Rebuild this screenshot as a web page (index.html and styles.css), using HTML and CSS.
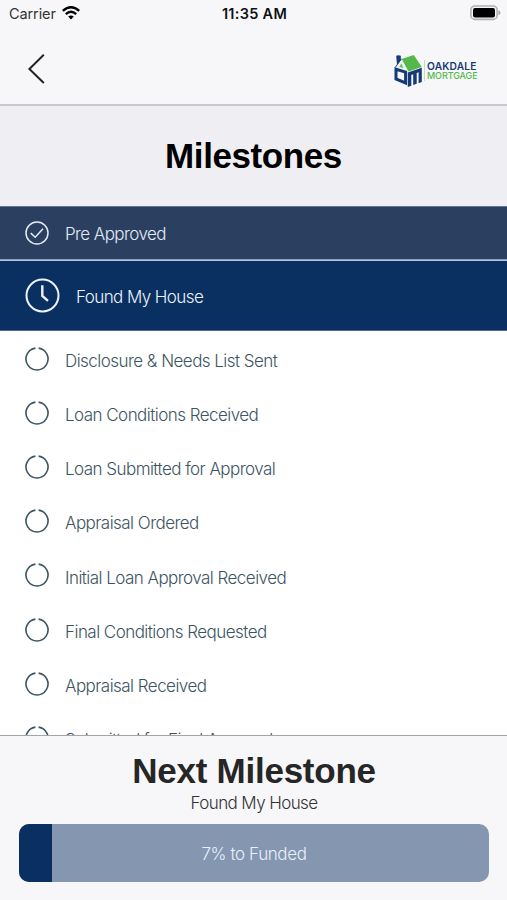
FILE: index.html
```html
<!DOCTYPE html>
<html lang="en">
<head>
<meta charset="utf-8">
<title>Milestones</title>
<link rel="stylesheet" href="styles.css">
</head>
<body>
<svg class="defs" width="0" height="0" aria-hidden="true">
  <symbol id="pending" viewBox="0 0 24 24"><path d="M10.4 1.1A11 11 0 1 0 13.6 1.1" fill="none" stroke="currentColor" stroke-width="1.6"/></symbol>
</svg>
<div class="app">
  <header class="top">
    <div class="status">
      <div class="carrier"><span>Carrier</span>
        <svg width="18" height="14" viewBox="0 0 18 14"><g fill="none" stroke="#000" stroke-width="2.4"><path d="M.8 4.9Q9-2.3 17.2 4.9"/><path d="M3.8 8.1Q9 3.6 14.2 8.1"/></g><path d="M6.2 10.6Q9 8.4 11.8 10.6L9 13.5Z"/></svg>
      </div>
      <time>11:35 AM</time>
      <svg class="battery" width="31" height="16" viewBox="0 0 31 16"><rect x=".9" y="1" width="26.2" height="13.4" rx="4" fill="#f7f7f9" stroke="#b0b0b2" stroke-width="1.6"/><rect x="3" y="3" width="22" height="9.5" rx="2" fill="#000"/><path d="M28.4 5.2Q30.5 6 30.5 7.7T28.4 10.2Z" fill="#aaa"/></svg>
    </div>
    <nav class="nav">
      <svg width="18" height="30" viewBox="0 0 18 30"><path d="M16.8.8L2.4 15L16.8 29" fill="none" stroke="#222" stroke-width="2"/></svg>
      <div class="logo">
        <svg width="29" height="34" viewBox="0 0 29 34">
          <path d="M2.2 1.8Q4.5.6 6.8 1.8V6.2L3 10.8Z" fill="#153a76"/>
          <path d="M1.5 14L7.6 5L14.6 17.6L3.2 14Z" fill="#eef4f3"/>
          <path d="M7.7 5L19.8 1L27.8 13L14.5 17.6Z" fill="#55b94a"/>
          <path d="M1.2 13.5L7.5 4.7" fill="none" stroke="#153a76" stroke-width="1"/>
          <path d="M5.2 13L7.4 9.5L9.5 14Z" fill="#69b970"/>
          <path d="M2 15.2L11.6 18V29L2 25Z" fill="none" stroke="#153a76" stroke-width="3"/>
          <path d="M13.8 18.4L27.8 13.8V28L24.6 29.2V18.2L22.7 18.9V29.8L19.2 31V20.2L17.3 20.9V31.8L13.8 33Z" fill="#153a76"/>
        </svg>
        <div class="wordmark"><b>OAKDALE</b><span>MORTGAGE</span></div>
      </div>
    </nav>
  </header>
  <div class="heading"><h1>Milestones</h1></div>
  <main class="list">
    <div class="row done"><svg width="24" height="24" viewBox="0 0 24 24" fill="none" stroke="currentColor" stroke-width="1.5"><circle cx="12" cy="12" r="11"/><path d="M5.8 12.1L10.2 16.3L18 7.8"/></svg><span>Pre Approved</span></div>
    <div class="row current"><svg width="35" height="35" viewBox="0 0 35 35" fill="none" stroke="currentColor" stroke-width="2"><circle cx="17.5" cy="17.5" r="16"/><path d="M17.3 7.3V18L23 22.8" stroke-width="2.4"/></svg><span>Found My House</span></div>
    <div class="pending-list">
      <div class="row"><svg width="24" height="24"><use href="#pending"/></svg><span>Disclosure &amp; Needs List Sent</span></div>
      <div class="row"><svg width="24" height="24"><use href="#pending"/></svg><span>Loan Conditions Received</span></div>
      <div class="row"><svg width="24" height="24"><use href="#pending"/></svg><span>Loan Submitted for Approval</span></div>
      <div class="row"><svg width="24" height="24"><use href="#pending"/></svg><span>Appraisal Ordered</span></div>
      <div class="row"><svg width="24" height="24"><use href="#pending"/></svg><span>Initial Loan Approval Received</span></div>
      <div class="row"><svg width="24" height="24"><use href="#pending"/></svg><span>Final Conditions Requested</span></div>
      <div class="row"><svg width="24" height="24"><use href="#pending"/></svg><span>Appraisal Received</span></div>
      <div class="row"><svg width="24" height="24"><use href="#pending"/></svg><span>Submitted for Final Approval</span></div>
    </div>
  </main>
  <footer class="next">
    <h2>Next Milestone</h2>
    <p>Found My House</p>
    <div class="progress"><div class="fill" style="width:7%"></div><span>7% to Funded</span></div>
  </footer>
</div>
</body>
</html>
```
FILE: styles.css
```css
* { box-sizing: border-box; }
body { margin: 0; font-family: Inter, "Liberation Sans", sans-serif; background: #f7f7f9; }
h1, h2, p { margin: 0; }
svg { display: block; flex: none; }
.defs { position: absolute; }
.app { height: 900px; display: flex; flex-direction: column; overflow: hidden; }
.top { height: 106px; flex: none; border-bottom: 2px solid #c9c9cb; }
.status { height: 28px; display: grid; grid-template-columns: 1fr auto 1fr; align-items: center; padding: 0 6px 0 9px; }
.carrier { display: flex; align-items: center; gap: 6px; font-size: 14.5px; color: #333; }
.carrier span { letter-spacing: -.1px; margin-top: -1px; }
.carrier svg { margin-top: -2px; }
.status time { font-size: 14.5px; font-weight: 600; letter-spacing: .3px; margin: -1px 1px 0 0; color: #111; }
.battery { justify-self: end; margin-top: -2px; }
.nav { display: flex; justify-content: space-between; align-items: center; height: 82px; padding: 0 29px 0 27px; }
.logo { display: flex; align-items: center; gap: 1px; margin-top: 3px; }
.wordmark { border-left: 1px solid #b9dfbd; padding: 1px 0 0 2px; width: 54px; color: #153a76; }
.wordmark b { display: block; font-size: 10.2px; line-height: 10px; font-weight: 600; letter-spacing: .2px; }
.wordmark span { display: block; font-size: 9px; line-height: 10px; font-weight: 500; color: #55b94a; letter-spacing: -.1px; }
.heading { height: 100px; flex: none; background: #efeef3; display: flex; align-items: center; justify-content: center; }
h1, h2 { font-family: "Liberation Sans", Arial, sans-serif; font-weight: 700; font-size: 35px; line-height: 40px; }
h1 { color: #000; letter-spacing: -.4px; }
h2 { color: #262626; letter-spacing: -.25px; }
.list { flex: 1; min-height: 0; overflow: hidden; background: #fff; }
.row { height: 54.2px; display: flex; align-items: center; gap: 16px; padding-left: 25px; color: #3d5562; font-size: 17px; font-weight: 300; white-space: nowrap; }
.row span { padding-top: 3px; letter-spacing: -.58px; }
.row.done { height: 54px; background: #2b4060; color: #e3ebf5; border-top: 1px solid #64758e; border-bottom: 1px solid #8ba0bd; padding-bottom: 1px; }
.row.done span { padding-top: 3px; }
.row.current { height: 71px; background: #0a2f61; color: #edf3fc; border-top: 1px solid #b6c4d9; border-bottom: 1px solid #52698c; padding-bottom: 1px; }
.pending-list { padding-top: .5px; }
.pending-list span { padding-top: 4.6px; letter-spacing: -.54px; }
.next { height: 165px; flex: none; border-top: 1px solid #a4a4a6; padding: 15px 18px 0 19px; text-align: center; background: #f7f7f9; }
.next p { font-size: 17px; line-height: 25px; font-weight: 300; letter-spacing: -.6px; color: #333; }
.progress { height: 58px; margin-top: 8px; border-radius: 10px; background: #8496b0; overflow: hidden; display: grid; align-items: center; }
.fill { grid-area: 1 / 1; height: 100%; background: #0a2f61; }
.progress span { grid-area: 1 / 1; padding-top: 1px; font-size: 17px; font-weight: 300; letter-spacing: -.4px; color: #e7f0fb; z-index: 1; }
```
